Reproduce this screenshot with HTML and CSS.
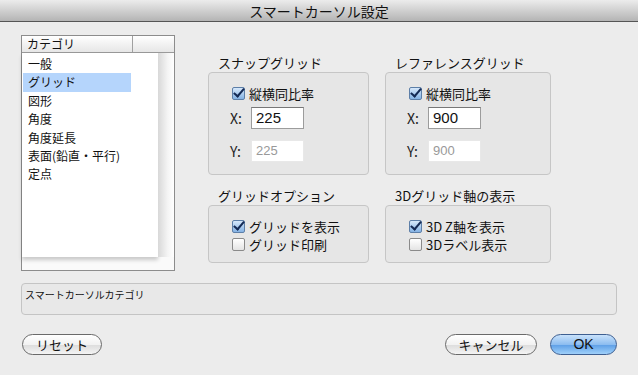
FILE: index.html
```html
<!DOCTYPE html>
<html lang="ja">
  <head>
    <meta charset="UTF-8" />
    <title>スマートカーソル設定</title>
    <link rel="stylesheet" href="styles.css">
  </head>
  <body>
    <div class="window">
      <div class="titlebar">スマートカーソル設定</div>

      <div class="main">
        <!-- Category list -->
        <div class="catlist">
          <div class="cat-head">
            <span class="cat-title">カテゴリ</span>
            <span class="cat-extra"></span>
          </div>
          <div class="cat-body">
            <ul class="cat-items">
              <li>一般</li>
              <li class="selected">グリッド</li>
              <li>図形</li>
              <li>角度</li>
              <li>角度延長</li>
              <li>表面(鉛直・平行)</li>
              <li>定点</li>
            </ul>
            <div class="cat-gutter"></div>
          </div>
        </div>

        <!-- Settings groups -->
        <div class="groups">
          <div class="group">
            <div class="group-label">スナップグリッド</div>
            <div class="group-box tall">
              <label class="check"><span class="box on"></span>縦横同比率</label>
              <div class="field"><span class="axis">X:</span><span class="input">225</span></div>
              <div class="field"><span class="axis">Y:</span><span class="input disabled">225</span></div>
            </div>
          </div>
          <div class="group">
            <div class="group-label">レファレンスグリッド</div>
            <div class="group-box tall">
              <label class="check"><span class="box on"></span>縦横同比率</label>
              <div class="field"><span class="axis">X:</span><span class="input">900</span></div>
              <div class="field"><span class="axis">Y:</span><span class="input disabled">900</span></div>
            </div>
          </div>
          <div class="group">
            <div class="group-label">グリッドオプション</div>
            <div class="group-box short">
              <label class="check"><span class="box on"></span>グリッドを表示</label>
              <label class="check"><span class="box"></span>グリッド印刷</label>
            </div>
          </div>
          <div class="group">
            <div class="group-label">3Dグリッド軸の表示</div>
            <div class="group-box short">
              <label class="check"><span class="box on"></span>3D Z軸を表示</label>
              <label class="check"><span class="box"></span>3Dラベル表示</label>
            </div>
          </div>
        </div>
      </div>

      <div class="status">スマートカーソルカテゴリ</div>

      <div class="buttons">
        <button class="btn">リセット</button>
        <div class="right">
          <button class="btn cancel">キャンセル</button>
          <button class="btn ok">OK</button>
        </div>
      </div>
    </div>
  </body>
</html>
```

FILE: styles.css
```css
body {
  margin: 0;
  font-family: "Noto Sans CJK JP", "Liberation Sans", sans-serif;
  color: #111;
}
.window {
  width: 638px;
  height: 375px;
  background: #ececec;
  overflow: hidden;
}
.titlebar {
  height: 22px;
  line-height: 23px;
  text-align: center;
  font-size: 14px;
  background: linear-gradient(#ececec, #b4b4b4);
  border-bottom: 1px solid #555;
  box-sizing: border-box;
}
.main {
  display: flex;
  padding: 13px 0 0 21px;
  height: 235px;
}

/* Category list */
.catlist {
  width: 154px;
  height: 236px;
  box-sizing: border-box;
  border: 1px solid #8c8c8c;
  background: #fafafa;
  display: flex;
  flex-direction: column;
}
.cat-head {
  display: flex;
  height: 16px;
  background: linear-gradient(#ffffff, #e6e6e6);
  border-bottom: 1px solid #9a9a9a;
  font-size: 12px;
  line-height: 16px;
}
.cat-title {
  width: 105px;
  padding-left: 5px;
  border-right: 1px solid #a0a0a0;
}
.cat-body {
  display: flex;
  height: 204px;
}
.cat-items {
  list-style: none;
  margin: 0;
  padding: 2px 0 0 1px;
  width: 136px;
  height: 100%;
  box-sizing: border-box;
  background: #fff;
  box-shadow: 0 3px 4px rgba(0, 0, 0, 0.2);
  font-size: 12px;
}
.cat-items li {
  height: 18.4px;
  line-height: 18px;
  padding-left: 5px;
  width: 103px;
}
.cat-items li.selected {
  background: #b5d5fc;
}
.cat-gutter {
  flex: 1;
  background: linear-gradient(90deg, #d8d8d8, #f4f4f4 60%, #ffffff);
}

/* Groups */
.groups {
  display: grid;
  grid-template-columns: 161px 166px;
  column-gap: 16px;
  row-gap: 13px;
  margin: 20px 0 0 33px;
  align-content: start;
}
.group-label {
  font-size: 13px;
  height: 17px;
  line-height: 15px;
  padding-left: 10px;
}
.group-box {
  box-sizing: border-box;
  border: 1px solid #c6c6c6;
  border-radius: 4px;
  background: #e6e6e6;
  padding: 11px 0 0 23px;
}
.group-box.tall {
  height: 103px;
}
.group-box.short {
  height: 58px;
  padding-top: 11px;
}
.check {
  display: flex;
  align-items: center;
  font-size: 13px;
  height: 18px;
}
.box {
  width: 13px;
  height: 13px;
  margin-right: 4px;
  box-sizing: border-box;
  border: 1px solid #8a8a8a;
  border-radius: 2px;
  background: linear-gradient(#ffffff, #e4e4e4);
  position: relative;
}
.box.on {
  border-color: #5d7fa8;
  background: linear-gradient(#d6e8fb, #84b2e4);
}
.box.on::after {
  content: "";
  position: absolute;
  left: 3px;
  top: -2px;
  width: 4px;
  height: 9px;
  border-right: 2.5px solid #142a55;
  border-bottom: 2.5px solid #142a55;
  transform: rotate(40deg);
}
.field {
  display: flex;
  align-items: center;
  margin-top: 5px;
  font-size: 14px;
  height: 22px;
}
.field + .field {
  margin-top: 11px;
}
.axis {
  width: 21px;
  margin-left: -2px;
  color: #222;
}
.input {
  width: 53px;
  height: 22px;
  box-sizing: border-box;
  border: 1px solid #9c9c9c;
  border-top-color: #777;
  background: #fff;
  font-family: "Liberation Sans", sans-serif;
  font-size: 15px;
  line-height: 20px;
  padding-left: 4px;
}
.input.disabled {
  border-color: #e8e8e8;
  color: #999;
  font-size: 13px;
}

/* Status */
.status {
  margin: 13px 21px 0 21px;
  height: 32px;
  box-sizing: border-box;
  border: 1px solid #c4c4c4;
  border-radius: 4px;
  background: #e8e8e8;
  font-size: 10px;
  padding: 3px 0 0 3px;
}

/* Buttons */
.buttons {
  display: flex;
  justify-content: space-between;
  margin: 19px 21px 0 22px;
}
.right {
  display: flex;
  gap: 13px;
}
.btn {
  height: 21px;
  border: 1px solid #6a6a6a;
  border-radius: 11px;
  background: linear-gradient(#ffffff, #f2f2f2 50%, #dcdcdc 51%, #f4f4f4);
  font-family: "Noto Sans CJK JP", "Liberation Sans", sans-serif;
  font-size: 13px;
  line-height: 17px;
  padding: 0;
  width: 80px;
  color: #111;
}
.btn.cancel {
  width: 92px;
}
.btn.ok {
  width: 67px;
  border-color: #3e5f91;
  background: linear-gradient(#c9e2fb, #8dbdf0 50%, #5c9ee6 51%, #9fd0fa);
  font-family: "Liberation Sans", sans-serif;
  font-size: 14px;
}
```
